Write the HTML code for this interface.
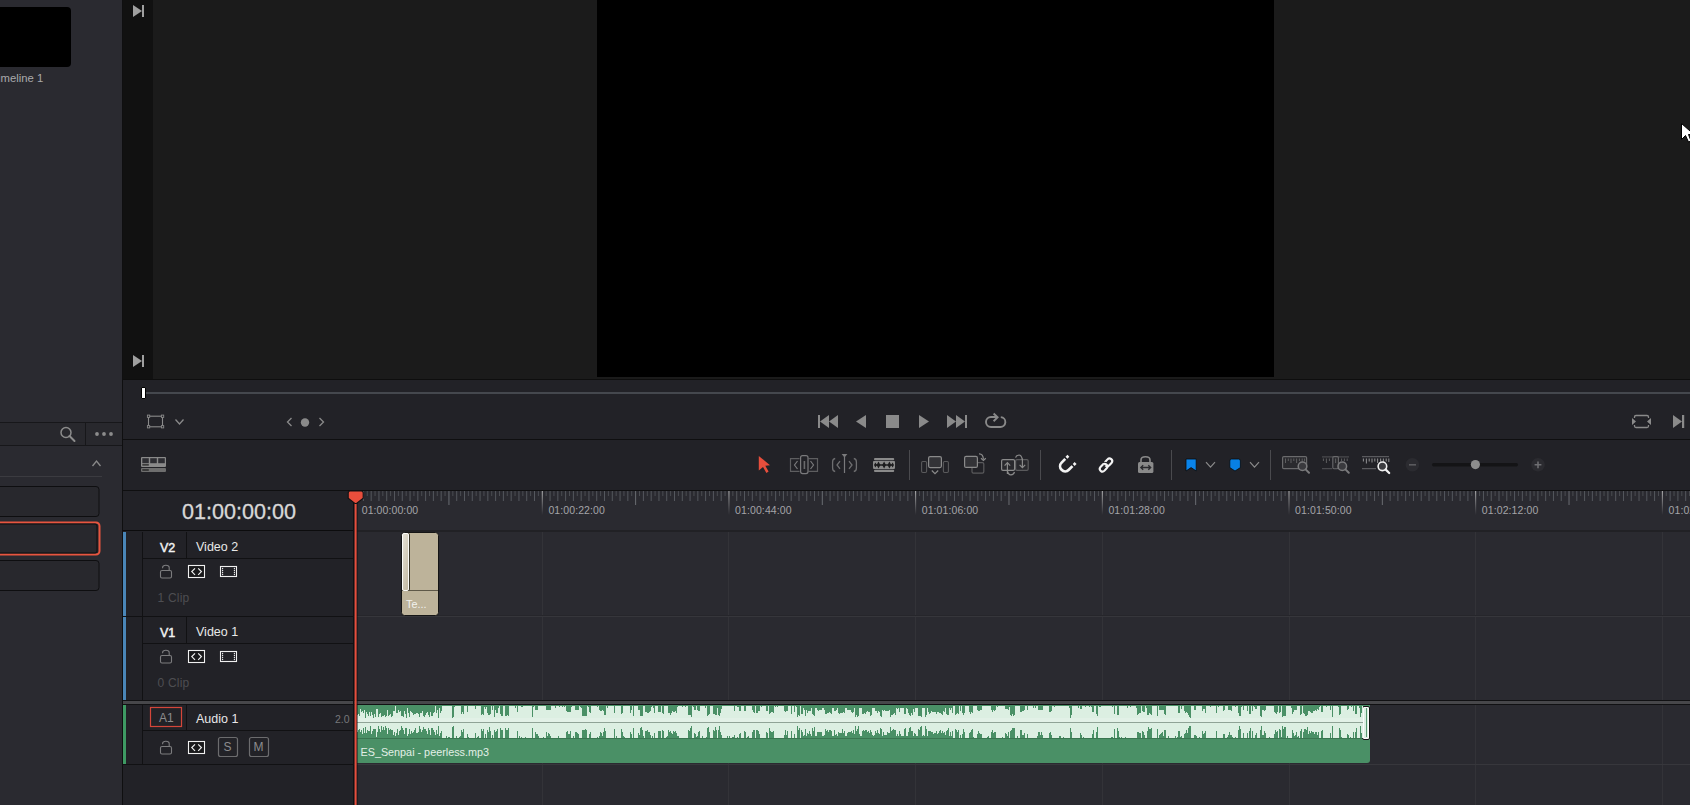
<!DOCTYPE html>
<html><head><meta charset="utf-8">
<style>
*{margin:0;padding:0;box-sizing:border-box}
html,body{width:1690px;height:805px;overflow:hidden;background:#222227;font-family:"Liberation Sans",sans-serif}
.a{position:absolute}
svg{position:absolute;overflow:visible}
.rl{top:504px;font-size:10.5px;color:#a4a4a8;white-space:nowrap;letter-spacing:0.1px}
.tn{font-size:12.5px;color:#e8e8e8;white-space:nowrap}
.tid{font-size:12.5px;color:#f2f2f2;white-space:nowrap;-webkit-text-stroke:0.45px #f2f2f2}
.cl{font-size:12px;color:#4e4e52;white-space:nowrap;letter-spacing:0.2px}
.hl{background:#111113}
</style></head><body>
<!-- LEFT PANEL -->
<div class="a" style="left:0;top:0;width:122px;height:805px;background:#2a2a30"></div>
<div class="a" style="left:122px;top:0;width:1px;height:805px;background:#0f0f10"></div>
<div class="a" style="left:-6px;top:7px;width:77px;height:60px;background:#000;border-radius:4px"></div>
<div class="a" style="left:-8.5px;top:71.5px;font-size:11.3px;color:#a9a9ab;white-space:nowrap">Timeline 1</div>
<div class="a" style="left:0;top:422px;width:122px;height:1px;background:#17171a"></div>
<div class="a" style="left:0;top:423px;width:122px;height:22px;background:#28282d"></div>
<div class="a" style="left:0;top:445px;width:122px;height:1px;background:#17171a"></div>
<div class="a" style="left:85px;top:423px;width:1px;height:22px;background:#17171a"></div>
<svg class="a" width="122" height="805" style="left:0;top:0">
 <circle cx="66" cy="432.5" r="5" fill="none" stroke="#8c8c8c" stroke-width="1.5"/>
 <path d="M69.5 436L74.5 441" stroke="#8c8c8c" stroke-width="2" stroke-linecap="round"/>
 <circle cx="97" cy="434" r="1.9" fill="#8c8c8c"/><circle cx="104" cy="434" r="1.9" fill="#8c8c8c"/><circle cx="111" cy="434" r="1.9" fill="#8c8c8c"/>
 <path d="M92.5 466L96.5 461L100.5 466" fill="none" stroke="#8a8a8a" stroke-width="1.3"/>
 <rect x="0" y="476" width="102" height="1" fill="#3b3b40"/>
 <rect x="-10" y="486.5" width="109" height="30" rx="3" fill="#28282d" stroke="#0e0e10" stroke-width="1"/>
 <rect x="-10" y="522.5" width="109.5" height="32" rx="3.5" fill="#28282d" stroke="#e8553f" stroke-width="2"/>
 <rect x="-10" y="524" width="107" height="29" rx="2" fill="none" stroke="#0e0e10" stroke-width="1"/>
 <rect x="-10" y="560.5" width="109" height="30" rx="3" fill="#28282d" stroke="#0e0e10" stroke-width="1"/>
</svg>

<!-- VIEWER -->
<div class="a" style="left:123px;top:0;width:30px;height:379px;background:#111111"></div>
<div class="a" style="left:153px;top:0;width:1537px;height:379px;background:#1b1b1b"></div>
<div class="a" style="left:597px;top:0;width:677px;height:377px;background:#000"></div>
<svg class="a" width="40" height="400" style="left:0;top:0">
 <path d="M133 5L142 11L133 17Z" fill="#a0a0a0"/><rect x="142" y="5" width="2" height="12" fill="#a0a0a0"/>
 <path d="M133 355L142 361L133 367Z" fill="#a0a0a0"/><rect x="142" y="355" width="2" height="12" fill="#a0a0a0"/>
</svg>
<!-- cursor -->
<svg class="a" width="20" height="30" style="left:0;top:0">
 <path d="M1681.5 123.5L1681.5 139.5L1685.5 135.5L1688.5 142L1691 141L1688.5 134.5L1694 134.5Z" fill="#fff" stroke="#000" stroke-width="1"/>
</svg>

<!-- SCRUBBER / TRANSPORT -->
<div class="a" style="left:123px;top:379px;width:1567px;height:1px;background:#0e0e0e"></div>
<div class="a" style="left:123px;top:380px;width:1567px;height:59px;background:#222227"></div>
<div class="a" style="left:145px;top:392px;width:1545px;height:2px;background:#45484e"></div>
<div class="a" style="left:141px;top:387px;width:5px;height:12px;background:#fff;border:1px solid #000;border-radius:1px"></div>
<svg class="a" width="1690" height="805" style="left:0;top:0">
 <rect x="148.5" y="416.2" width="14" height="10.6" fill="none" stroke="#8a8a8a" stroke-width="1.1"/>
 <g fill="#222227" stroke="#8a8a8a" stroke-width="0.9">
  <rect x="147.4" y="415.1" width="2.3" height="2.3"/><rect x="161.4" y="415.1" width="2.3" height="2.3"/>
  <rect x="147.4" y="425.6" width="2.3" height="2.3"/><rect x="161.4" y="425.6" width="2.3" height="2.3"/>
 </g>
 <path d="M175.5 419.5L179.5 424L183.5 419.5" fill="none" stroke="#8a8a8a" stroke-width="1.3"/>
 <path d="M291.5 418L287.5 422L291.5 426" fill="none" stroke="#8a8a8a" stroke-width="1.3"/>
 <circle cx="305" cy="422.5" r="4.2" fill="#8a8a8a"/>
 <path d="M319.5 418L323.5 422L319.5 426" fill="none" stroke="#8a8a8a" stroke-width="1.3"/>
 <!-- transport -->
 <g fill="#8a8a8a">
  <rect x="818" y="415" width="2" height="13"/>
  <path d="M829 415L820 421.5L829 428Z M838 415L829 421.5L838 428Z"/>
  <path d="M866 415L856 421.5L866 428Z"/>
  <rect x="886" y="415" width="13" height="13"/>
  <path d="M919 415L929 421.5L919 428Z"/>
  <path d="M947 415L956 421.5L947 428Z M956 415L965 421.5L956 428Z"/>
  <rect x="965" y="415" width="2" height="13"/>
 </g>
 <path d="M1000.8 417.1A4.95 4.95 0 0 1 1000 427H991A5 5 0 0 1 991 417H997" fill="none" stroke="#8a8a8a" stroke-width="1.9"/>
 <path d="M993.6 413.5L997.6 417.3L993.6 421.2" fill="none" stroke="#8a8a8a" stroke-width="1.9"/>
 <!-- right -->
 <rect x="1634.5" y="415.5" width="14" height="12" rx="1.5" fill="none" stroke="#8a8a8a" stroke-width="1.3"/>
 <rect x="1633" y="418" width="17" height="7" fill="#222227"/>
 <path d="M1632 418L1636 421.5L1632 425Z M1651 418L1647 421.5L1651 425Z" fill="#8a8a8a"/>
 <path d="M1673 415L1682 421.5L1673 428Z" fill="#8a8a8a"/><rect x="1682" y="415" width="2.2" height="13" fill="#8a8a8a"/>
</svg>
<div class="a" style="left:123px;top:439px;width:1567px;height:1px;background:#0f0f10"></div>

<!-- TOOLBAR -->
<div class="a" style="left:123px;top:440px;width:1567px;height:50px;background:#222227"></div>
<svg class="a" width="1690" height="805" style="left:0;top:0">
 <!-- layout icon -->
 <rect x="141" y="457" width="25" height="10" rx="1" fill="#8a8a8a"/>
 <rect x="142.3" y="458.2" width="6.5" height="5" fill="#2e2e33"/>
 <rect x="150.2" y="458.2" width="6.6" height="5" fill="#2e2e33"/>
 <rect x="158.2" y="458.2" width="6.6" height="5" fill="#2e2e33"/>
 <rect x="142.3" y="464.3" width="6.5" height="1.2" fill="#1a1a1a"/>
 <rect x="141" y="468" width="25" height="4" rx="1" fill="#6e6e6e"/>
 <rect x="142.3" y="469.4" width="6.5" height="1.2" fill="#1a1a1a"/>
 <!-- select arrow -->
 <path d="M758.8 455.9L770 465.2L765.3 465.8L768.6 471.6L766.4 472.9L763 467L758.8 470.6Z" fill="#e84e3c"/>
 <!-- trim -->
 <g fill="none" stroke="#5e5e60" stroke-width="1.2">
  <path d="M799.5 458.6H790.5V471.4H799.5M808.5 458.6H817.5V471.4H808.5"/>
 </g>
 <g fill="none" stroke="#7a7a7c" stroke-width="1.2">
  <path d="M797.5 461L794.5 465L797.5 469M810.5 461L813.5 465L810.5 469"/>
  <rect x="800.6" y="455.6" width="7.4" height="18" rx="2"/>
 </g>
 <rect x="803.6" y="461" width="1.6" height="8" fill="#6a6a6c"/>
 <!-- dynamic trim -->
 <g fill="none" stroke="#6e6e70" stroke-width="1.3">
  <path d="M835.2 458.5Q832.6 458.8 832.6 462V468Q832.6 471.2 835.2 471.5"/>
  <path d="M853.8 458.5Q856.4 458.8 856.4 462V468Q856.4 471.2 853.8 471.5"/>
  <path d="M840 461.2L837 465L840 468.8M849 461.2L852 465L849 468.8"/>
 </g>
 <rect x="843.9" y="456" width="1.2" height="17" fill="#7a7a7c"/>
 <path d="M841.6 454H847.4L844.5 457.6Z" fill="#7a7a7c"/>
 <!-- blade -->
 <g fill="#8a8a8a">
  <rect x="874" y="458" width="20.2" height="2.2" rx="1"/>
  <rect x="874" y="469.8" width="20.2" height="2.2" rx="1"/>
  <rect x="873" y="460.9" width="22" height="8" rx="0.8"/>
 </g>
 <path d="M875 465H893" stroke="#1c1c1e" stroke-width="1.5"/>
 <path d="M878.5 461.6L880.4 465L878.5 468.4L876.6 465ZM884.1 461.6L886 465L884.1 468.4L882.2 465ZM889.4 461.6L891.3 465L889.4 468.4L887.5 465ZM875.4 462.6L876.8 465L875.4 467.4L874 465ZM892.6 462.6L894 465L892.6 467.4L891.2 465Z" fill="#1c1c1e"/>
 <rect x="909" y="450" width="1" height="30" fill="#4a4a4e"/>
 <!-- insert -->
 <g fill="none" stroke="#5a5a5c" stroke-width="1.1">
  <rect x="921.6" y="461.5" width="5" height="11" rx="1.2"/>
  <rect x="943.4" y="461.5" width="5" height="11" rx="1.2"/>
 </g>
 <rect x="928.6" y="456.6" width="12.8" height="11" rx="1.5" fill="#333337" stroke="#8a8a8a" stroke-width="1.2"/>
 <path d="M931.8 470.5L935 473.6L938.2 470.5" fill="none" stroke="#8a8a8a" stroke-width="1.2"/>
 <!-- overwrite -->
 <path d="M977.5 462.6H982.4Q983.8 462.6 983.8 464V471.8Q983.8 473.2 982.4 473.2H973.4Q972 473.2 972 471.8V467.8" fill="none" stroke="#5a5a5c" stroke-width="1.2"/>
 <rect x="964.6" y="456.4" width="12.8" height="11" rx="1.5" fill="#333337" stroke="#8a8a8a" stroke-width="1.2"/>
 <path d="M979 453.8Q983.2 453.6 983.4 459.6" fill="none" stroke="#8a8a8a" stroke-width="1.2"/>
 <path d="M981 458.2L983.4 460.4L985.8 458.2" fill="none" stroke="#8a8a8a" stroke-width="1.2"/>
 <!-- replace -->
 <rect x="1015.6" y="459.6" width="12.6" height="10.8" rx="1.3" fill="#29292d" stroke="#5a5a5c" stroke-width="1.2"/>
 <rect x="1001.6" y="459.6" width="13" height="10.8" rx="1.3" fill="#29292d" stroke="#8a8a8a" stroke-width="1.2"/>
 <path d="M1007.4 474V463M1004.6 465.6L1007.4 462.6L1010.2 465.6" fill="none" stroke="#8a8a8a" stroke-width="1.2"/>
 <path d="M1007.4 471Q1008.5 475 1011 474.8Q1013.8 474.6 1014.5 472" fill="none" stroke="#8a8a8a" stroke-width="1.2"/>
 <path d="M1022.4 458.5V467.5M1019.6 464.8L1022.4 467.6L1025.2 464.8" fill="none" stroke="#8a8a8a" stroke-width="1.2"/>
 <path d="M1022.4 460Q1021.5 455 1019 455Q1016.3 455.2 1015.6 457.6" fill="none" stroke="#8a8a8a" stroke-width="1.2"/>
 <rect x="1040" y="450" width="1" height="30" fill="#4a4a4e"/>
 <!-- magnet -->
 <g transform="translate(1065.2 466.2) rotate(45)" fill="none" stroke="#f4f4f4" stroke-width="2.7">
  <path d="M-5.1 -5.2V0A5.1 5.1 0 0 0 5.1 0V-5.2"/>
 </g>
 <g transform="translate(1065.2 466.2) rotate(45)" fill="#f4f4f4">
  <rect x="-6.45" y="-9.6" width="2.7" height="2.7"/><rect x="3.75" y="-9.6" width="2.7" height="2.7"/>
 </g>
 <!-- link -->
 <g transform="translate(1106 465) rotate(-48)" fill="none" stroke-width="2.1">
  <path d="M-5.2 -2.7H-2A2.7 2.7 0 0 1 -2 2.7H-5.2A2.7 2.7 0 0 1 -5.2 -2.7Z" stroke="#f4f4f4"/>
  <path d="M2 -2.7H5.2A2.7 2.7 0 0 1 5.2 2.7H2A2.7 2.7 0 0 1 2 -2.7Z" stroke="#f4f4f4"/>
  <path d="M-1.301 -2.608A2.7 2.7 0 0 1 0.659 -0.469" stroke="#222227" stroke-width="4"/>
  <path d="M-1.5 -2.64A2.7 2.7 0 0 1 0.7 -0.3" stroke="#f4f4f4"/>
 </g>
 <!-- lock link -->
 <path d="M1141 462.5V460Q1141 456.8 1145.5 456.8Q1150 456.8 1150 460V462.5" fill="none" stroke="#8a8a8a" stroke-width="1.6"/>
 <rect x="1138" y="462" width="15.4" height="11" rx="1.5" fill="#8a8a8a"/>
 <path d="M1141 467.5H1150.5M1143.2 465.2L1140.8 467.5L1143.2 469.8M1148.3 465.2L1150.7 467.5L1148.3 469.8" fill="none" stroke="#2a2a2e" stroke-width="1.3"/>
 <rect x="1171" y="450" width="1" height="30" fill="#4a4a4e"/>
 <!-- flag -->
 <path d="M1186 459H1196.2V471L1191.1 467.6L1186 471Z" fill="#0a84ea" stroke="#0b0b0b" stroke-width="0.8"/>
 <path d="M1206 462.2L1210.5 467.2L1215 462.2" fill="none" stroke="#8a8a8a" stroke-width="1.2"/>
 <path d="M1231.5 459H1238.5Q1240.4 459 1240.4 461V467.6L1235 471L1229.8 467.6V461Q1229.8 459 1231.5 459Z" fill="#0880e4" stroke="#0b0b0b" stroke-width="0.8"/>
 <path d="M1250 462.2L1254.5 467.2L1259 462.2" fill="none" stroke="#8a8a8a" stroke-width="1.2"/>
 <rect x="1270" y="450" width="1" height="30" fill="#4a4a4e"/>
 <!-- zoom icons -->
 <rect x="1282.6" y="456.6" width="24" height="12" rx="1.2" fill="#2a2a2e" stroke="#6a6a6c" stroke-width="1.2"/>
 <path d="M1285.5 458.5V463M1288.3 458.5V461M1291 458.5V463M1293.8 458.5V461M1296.6 458.5V463M1299.4 458.5V461M1302.2 458.5V462M1304.6 458.5V461" stroke="#5e5e60" stroke-width="1"/>
 <circle cx="1302.5" cy="466.3" r="4.3" fill="#3a3a3e" stroke="#7a7a7c" stroke-width="1.5"/>
 <path d="M1305.6 469.4L1309 472.8" stroke="#7a7a7c" stroke-width="2" stroke-linecap="round"/>
 <!-- icon 2 -->
 <path d="M1322 456.8H1349M1322 468.6H1332" stroke="#4a4a4e" stroke-width="1.2"/>
 <path d="M1323.4 458.5V461M1326.4 458.5V463M1329.4 458.5V461M1341.6 458.5V461M1344.4 458.5V461M1347.2 458.5V461" stroke="#5e5e60" stroke-width="1"/>
 <rect x="1332.8" y="456.6" width="5.6" height="12.2" rx="1.2" fill="#2a2a2e" stroke="#6a6a6c" stroke-width="1.1"/>
 <path d="M1335.6 458.5V463" stroke="#5e5e60" stroke-width="1"/>
 <circle cx="1342.3" cy="466.3" r="4.3" fill="#3a3a3e" stroke="#7a7a7c" stroke-width="1.5"/>
 <path d="M1345.4 469.4L1348.8 472.8" stroke="#7a7a7c" stroke-width="2" stroke-linecap="round"/>
 <!-- icon 3 -->
 <path d="M1362 456.6H1389M1362 468.6H1376" stroke="#5a5a5e" stroke-width="1.3"/>
 <path d="M1363.4 458.5V461.5M1366.4 458.5V463.5M1369.2 458.5V461.5M1372 458.5V462.5M1374.8 458.5V461.5M1377.6 458.5V463M1380.6 458.5V461.5M1383.4 458.5V462M1386.2 458.5V461.5M1388.8 458.5V462" stroke="#8a8a8c" stroke-width="1.1"/>
 <circle cx="1382.4" cy="466.3" r="4.3" fill="#3e3e42" stroke="#f2f2f2" stroke-width="1.6"/>
 <path d="M1385.5 469.4L1389.2 473" stroke="#f2f2f2" stroke-width="2.2" stroke-linecap="round"/>
 <!-- slider -->
 <circle cx="1412.4" cy="464.7" r="6.8" fill="#2b2b30"/>
 <rect x="1409" y="464" width="7" height="1.6" fill="#5a5a5e"/>
 <rect x="1432" y="463" width="86" height="3.4" rx="1.7" fill="#141416"/>
 <circle cx="1475.4" cy="464.6" r="4.6" fill="#8c8c8c"/>
 <circle cx="1538" cy="464.7" r="6.8" fill="#2b2b30"/>
 <path d="M1534.6 464.8H1541.4M1538 461.4V468.2" stroke="#6e6e72" stroke-width="1.6"/>
</svg>

<div class="a" style="left:123px;top:490px;width:1567px;height:1px;background:#0f0f10"></div>

<!-- TIMELINE -->
<div class="a" style="left:123px;top:491px;width:231px;height:314px;background:#222227"></div>
<div class="a" style="left:354px;top:491px;width:1336px;height:314px;background:#2a2a30"></div>
<div class="a" style="left:542px;top:531px;width:1px;height:274px;background:#333338"></div><div class="a" style="left:728px;top:531px;width:1px;height:274px;background:#333338"></div><div class="a" style="left:915px;top:531px;width:1px;height:274px;background:#333338"></div><div class="a" style="left:1102px;top:531px;width:1px;height:274px;background:#333338"></div><div class="a" style="left:1289px;top:531px;width:1px;height:274px;background:#333338"></div><div class="a" style="left:1475px;top:531px;width:1px;height:274px;background:#333338"></div><div class="a" style="left:1662px;top:531px;width:1px;height:274px;background:#333338"></div><svg class="a" width="1690" height="805" style="left:0;top:0">
<path d="M359.49 491V496M367.27 491V496M375.05 491V496M382.82 491V496M390.60 491V496M398.38 491V496M406.16 491V496M413.94 491V496M421.72 491V496M429.49 491V496M437.27 491V496M445.05 491V496M452.83 491V496M460.61 491V496M468.39 491V496M476.16 491V496M483.94 491V496M491.72 491V496M499.50 491V496M507.28 491V496M515.06 491V496M522.83 491V496M530.61 491V496M538.39 491V496M546.17 491V496M553.95 491V496M561.73 491V496M569.50 491V496M577.28 491V496M585.06 491V496M592.84 491V496M600.62 491V496M608.40 491V496M616.17 491V496M623.95 491V496M631.73 491V496M639.51 491V496M647.29 491V496M655.07 491V496M662.84 491V496M670.62 491V496M678.40 491V496M686.18 491V496M693.96 491V496M701.74 491V496M709.51 491V496M717.29 491V496M725.07 491V496M732.85 491V496M740.63 491V496M748.41 491V496M756.18 491V496M763.96 491V496M771.74 491V496M779.52 491V496M787.30 491V496M795.08 491V496M802.85 491V496M810.63 491V496M818.41 491V496M826.19 491V496M833.97 491V496M841.75 491V496M849.52 491V496M857.30 491V496M865.08 491V496M872.86 491V496M880.64 491V496M888.42 491V496M896.19 491V496M903.97 491V496M911.75 491V496M919.53 491V496M927.31 491V496M935.09 491V496M942.86 491V496M950.64 491V496M958.42 491V496M966.20 491V496M973.98 491V496M981.76 491V496M989.53 491V496M997.31 491V496M1005.09 491V496M1012.87 491V496M1020.65 491V496M1028.43 491V496M1036.20 491V496M1043.98 491V496M1051.76 491V496M1059.54 491V496M1067.32 491V496M1075.10 491V496M1082.87 491V496M1090.65 491V496M1098.43 491V496M1106.21 491V496M1113.99 491V496M1121.77 491V496M1129.54 491V496M1137.32 491V496M1145.10 491V496M1152.88 491V496M1160.66 491V496M1168.44 491V496M1176.21 491V496M1183.99 491V496M1191.77 491V496M1199.55 491V496M1207.33 491V496M1215.11 491V496M1222.88 491V496M1230.66 491V496M1238.44 491V496M1246.22 491V496M1254.00 491V496M1261.78 491V496M1269.55 491V496M1277.33 491V496M1285.11 491V496M1292.89 491V496M1300.67 491V496M1308.45 491V496M1316.22 491V496M1324.00 491V496M1331.78 491V496M1339.56 491V496M1347.34 491V496M1355.12 491V496M1362.89 491V496M1370.67 491V496M1378.45 491V496M1386.23 491V496M1394.01 491V496M1401.79 491V496M1409.56 491V496M1417.34 491V496M1425.12 491V496M1432.90 491V496M1440.68 491V496M1448.46 491V496M1456.23 491V496M1464.01 491V496M1471.79 491V496M1479.57 491V496M1487.35 491V496M1495.13 491V496M1502.90 491V496M1510.68 491V496M1518.46 491V496M1526.24 491V496M1534.02 491V496M1541.80 491V496M1549.57 491V496M1557.35 491V496M1565.13 491V496M1572.91 491V496M1580.69 491V496M1588.47 491V496M1596.24 491V496M1604.02 491V496M1611.80 491V496M1619.58 491V496M1627.36 491V496M1635.14 491V496M1642.91 491V496M1650.69 491V496M1658.47 491V496M1666.25 491V496M1674.03 491V496M1681.81 491V496M1689.58 491V496" stroke="#4b4d52" stroke-width="1"/>
<path d="M363.38 491V501M371.16 491V501M378.94 491V501M386.71 491V501M394.49 491V501M402.27 491V501M410.05 491V501M417.83 491V501M425.61 491V501M433.38 491V501M441.16 491V501M456.72 491V501M464.50 491V501M472.28 491V501M480.05 491V501M487.83 491V501M495.61 491V501M503.39 491V501M511.17 491V501M518.95 491V501M526.72 491V501M534.50 491V501M550.06 491V501M557.84 491V501M565.62 491V501M573.39 491V501M581.17 491V501M588.95 491V501M596.73 491V501M604.51 491V501M612.29 491V501M620.06 491V501M627.84 491V501M643.40 491V501M651.18 491V501M658.96 491V501M666.73 491V501M674.51 491V501M682.29 491V501M690.07 491V501M697.85 491V501M705.62 491V501M713.40 491V501M721.18 491V501M736.74 491V501M744.52 491V501M752.30 491V501M760.07 491V501M767.85 491V501M775.63 491V501M783.41 491V501M791.19 491V501M798.97 491V501M806.74 491V501M814.52 491V501M830.08 491V501M837.86 491V501M845.63 491V501M853.41 491V501M861.19 491V501M868.97 491V501M876.75 491V501M884.53 491V501M892.31 491V501M900.08 491V501M907.86 491V501M923.42 491V501M931.20 491V501M938.98 491V501M946.75 491V501M954.53 491V501M962.31 491V501M970.09 491V501M977.87 491V501M985.64 491V501M993.42 491V501M1001.20 491V501M1016.76 491V501M1024.54 491V501M1032.32 491V501M1040.09 491V501M1047.87 491V501M1055.65 491V501M1063.43 491V501M1071.21 491V501M1078.99 491V501M1086.76 491V501M1094.54 491V501M1110.10 491V501M1117.88 491V501M1125.65 491V501M1133.43 491V501M1141.21 491V501M1148.99 491V501M1156.77 491V501M1164.55 491V501M1172.33 491V501M1180.10 491V501M1187.88 491V501M1203.44 491V501M1211.22 491V501M1218.99 491V501M1226.77 491V501M1234.55 491V501M1242.33 491V501M1250.11 491V501M1257.89 491V501M1265.66 491V501M1273.44 491V501M1281.22 491V501M1296.78 491V501M1304.56 491V501M1312.34 491V501M1320.11 491V501M1327.89 491V501M1335.67 491V501M1343.45 491V501M1351.23 491V501M1359.01 491V501M1366.78 491V501M1374.56 491V501M1390.12 491V501M1397.90 491V501M1405.68 491V501M1413.45 491V501M1421.23 491V501M1429.01 491V501M1436.79 491V501M1444.57 491V501M1452.34 491V501M1460.12 491V501M1467.90 491V501M1483.46 491V501M1491.24 491V501M1499.01 491V501M1506.79 491V501M1514.57 491V501M1522.35 491V501M1530.13 491V501M1537.91 491V501M1545.68 491V501M1553.46 491V501M1561.24 491V501M1576.80 491V501M1584.58 491V501M1592.36 491V501M1600.13 491V501M1607.91 491V501M1615.69 491V501M1623.47 491V501M1631.25 491V501M1639.03 491V501M1646.80 491V501M1654.58 491V501M1670.14 491V501M1677.92 491V501M1685.70 491V501" stroke="#55585e" stroke-width="1"/>
<path d="M448.94 491V505M635.62 491V505M822.30 491V505M1008.98 491V505M1195.66 491V505M1382.34 491V505M1569.02 491V505" stroke="#6a6d72" stroke-width="1"/>
</svg><svg class="a" width="1690" height="805" style="left:0;top:0"><defs><linearGradient id="mt" x1="0" y1="0" x2="0" y2="1"><stop offset="0" stop-color="#b8b8b8"/><stop offset="1" stop-color="#2a2a30"/></linearGradient></defs><rect x="541.78" y="491" width="1" height="24" fill="url(#mt)"/><rect x="728.46" y="491" width="1" height="24" fill="url(#mt)"/><rect x="915.14" y="491" width="1" height="24" fill="url(#mt)"/><rect x="1101.82" y="491" width="1" height="24" fill="url(#mt)"/><rect x="1288.50" y="491" width="1" height="24" fill="url(#mt)"/><rect x="1475.18" y="491" width="1" height="24" fill="url(#mt)"/><rect x="1661.86" y="491" width="1" height="24" fill="url(#mt)"/></svg><div class="a rl" style="left:361.7px">01:00:00:00</div><div class="a rl" style="left:548.4px">01:00:22:00</div><div class="a rl" style="left:735.1px">01:00:44:00</div><div class="a rl" style="left:921.7px">01:01:06:00</div><div class="a rl" style="left:1108.4px">01:01:28:00</div><div class="a rl" style="left:1295.1px">01:01:50:00</div><div class="a rl" style="left:1481.8px">01:02:12:00</div><div class="a rl" style="left:1668.5px">01:02:34:00</div>
<div class="a" style="left:123px;top:530px;width:231px;height:1px;background:#0c0c0d"></div>
<div class="a" style="left:354px;top:530px;width:1336px;height:2px;background:#212125"></div>
<div class="a" style="left:182px;top:498.5px;font-size:21.6px;color:#d8d8d8;white-space:nowrap;-webkit-text-stroke:0.3px #d8d8d8">01:00:00:00</div>
<!-- track headers lines -->
<div class="a" style="left:123px;top:532px;width:3px;height:84px;background:#4a86b8"></div>
<div class="a" style="left:123px;top:617px;width:3px;height:83px;background:#4a86b8"></div>
<div class="a" style="left:123px;top:705px;width:3px;height:59px;background:#3e9a63"></div>
<div class="a hl" style="left:142px;top:532px;width:1px;height:84px"></div>
<div class="a hl" style="left:142px;top:617px;width:1px;height:83px"></div>
<div class="a hl" style="left:142px;top:705px;width:1px;height:59px"></div>
<div class="a hl" style="left:186px;top:532px;width:1px;height:26px"></div>
<div class="a hl" style="left:186px;top:617px;width:1px;height:26px"></div>
<div class="a hl" style="left:186px;top:705px;width:1px;height:25px"></div>
<div class="a hl" style="left:142px;top:558px;width:212px;height:1px"></div>
<div class="a hl" style="left:142px;top:643px;width:212px;height:1px"></div>
<div class="a hl" style="left:142px;top:730px;width:212px;height:1px"></div>
<div class="a hl" style="left:123px;top:616px;width:231px;height:1px"></div>
<div class="a" style="left:354px;top:615px;width:1336px;height:1px;background:#26262b"></div>
<div class="a" style="left:354px;top:616px;width:1336px;height:1px;background:#36363b"></div>
<div class="a hl" style="left:123px;top:700px;width:1567px;height:1px"></div>
<div class="a" style="left:123px;top:701px;width:1567px;height:3px;background:#47474a"></div>
<div class="a hl" style="left:123px;top:704px;width:1567px;height:1px"></div>
<div class="a hl" style="left:123px;top:764px;width:231px;height:1px"></div>
<div class="a" style="left:354px;top:764px;width:1336px;height:1px;background:#37373c"></div>
<div class="a hl" style="left:353px;top:491px;width:1px;height:314px"></div>
<!-- names -->
<div class="a tid" style="left:160px;top:540.5px">V2</div>
<div class="a tn" style="left:196px;top:540px">Video 2</div>
<div class="a cl" style="left:157.5px;top:590.5px">1 Clip</div>
<div class="a tid" style="left:160px;top:625.5px">V1</div>
<div class="a tn" style="left:196px;top:625px">Video 1</div>
<div class="a cl" style="left:157.5px;top:675.5px">0 Clip</div>
<div class="a tn" style="left:196px;top:712px">Audio 1</div>
<div class="a" style="left:335px;top:713px;font-size:10.5px;color:#77777a">2.0</div>
<svg class="a" width="1690" height="805" style="left:0;top:0">
 <g transform="translate(0 0)"><rect x="160.5" y="570.5" width="11" height="7.5" rx="1.5" fill="none" stroke="#7c7c7e" stroke-width="1.1"/>
   <path d="M162.6 568.2V567.6A3.3 2.3 0 0 1 169.2 567.6V570.5" fill="none" stroke="#7c7c7e" stroke-width="1.1"/></g><g transform="translate(0 0)"><rect x="188.5" y="565.5" width="16" height="12" fill="#19191b" stroke="#f0f0f0" stroke-width="1.1"/>
   <path d="M195 568.3L191.8 571.6L195 574.9M198.2 568.3L201.4 571.6L198.2 574.9" fill="none" stroke="#f0f0f0" stroke-width="1.2"/></g>
 <g transform="translate(0 85)"><rect x="160.5" y="570.5" width="11" height="7.5" rx="1.5" fill="none" stroke="#7c7c7e" stroke-width="1.1"/>
   <path d="M162.6 568.2V567.6A3.3 2.3 0 0 1 169.2 567.6V570.5" fill="none" stroke="#7c7c7e" stroke-width="1.1"/></g><g transform="translate(0 85)"><rect x="188.5" y="565.5" width="16" height="12" fill="#19191b" stroke="#f0f0f0" stroke-width="1.1"/>
   <path d="M195 568.3L191.8 571.6L195 574.9M198.2 568.3L201.4 571.6L198.2 574.9" fill="none" stroke="#f0f0f0" stroke-width="1.2"/></g>
 <g transform="translate(0 176)"><rect x="160.5" y="570.5" width="11" height="7.5" rx="1.5" fill="none" stroke="#7c7c7e" stroke-width="1.1"/>
   <path d="M162.6 568.2V567.6A3.3 2.3 0 0 1 169.2 567.6V570.5" fill="none" stroke="#7c7c7e" stroke-width="1.1"/></g><g transform="translate(0 176)"><rect x="188.5" y="565.5" width="16" height="12" fill="#19191b" stroke="#f0f0f0" stroke-width="1.1"/>
   <path d="M195 568.3L191.8 571.6L195 574.9M198.2 568.3L201.4 571.6L198.2 574.9" fill="none" stroke="#f0f0f0" stroke-width="1.2"/></g>
 <g><rect x="220.5" y="566.5" width="16" height="10" fill="none" stroke="#f0f0f0" stroke-width="1.1"/>
  <g fill="#f0f0f0"><circle cx="222.6" cy="568.5" r=".65"/><circle cx="222.6" cy="570.5" r=".65"/><circle cx="222.6" cy="572.5" r=".65"/><circle cx="222.6" cy="574.5" r=".65"/>
  <circle cx="234.4" cy="568.5" r=".65"/><circle cx="234.4" cy="570.5" r=".65"/><circle cx="234.4" cy="572.5" r=".65"/><circle cx="234.4" cy="574.5" r=".65"/></g></g>
 <g transform="translate(0 85)"><rect x="220.5" y="566.5" width="16" height="10" fill="none" stroke="#f0f0f0" stroke-width="1.1"/>
  <g fill="#f0f0f0"><circle cx="222.6" cy="568.5" r=".65"/><circle cx="222.6" cy="570.5" r=".65"/><circle cx="222.6" cy="572.5" r=".65"/><circle cx="222.6" cy="574.5" r=".65"/>
  <circle cx="234.4" cy="568.5" r=".65"/><circle cx="234.4" cy="570.5" r=".65"/><circle cx="234.4" cy="572.5" r=".65"/><circle cx="234.4" cy="574.5" r=".65"/></g></g>
 <rect x="150.5" y="707.5" width="31" height="19" fill="none" stroke="#d4463a" stroke-width="1.2"/>
 <rect x="218.5" y="737.5" width="19" height="19" rx="2" fill="none" stroke="#6c6c6e" stroke-width="1.2"/>
 <rect x="249.5" y="737.5" width="19" height="19" rx="2" fill="none" stroke="#6c6c6e" stroke-width="1.2"/>
</svg>
<div class="a" style="left:159px;top:711px;font-size:12px;color:#8c8c8e">A1</div>
<div class="a" style="left:223.5px;top:740px;font-size:12px;color:#8c8c8e">S</div>
<div class="a" style="left:253.5px;top:740px;font-size:12px;color:#8c8c8e">M</div>
<!-- V2 clip -->
<div class="a" style="left:401px;top:532px;width:38px;height:84px;background:#bdb39a;border-radius:3.5px;border:1px solid #151515"></div>
<div class="a" style="left:402px;top:590px;width:36px;height:1px;background:#5e5848"></div>
<div class="a" style="left:402px;top:533px;width:6.5px;height:57.5px;border:1px solid #fbfbf8;border-radius:2px;background:linear-gradient(100deg,#e4e0d4,#c2b9a2);box-shadow:1px 0 0 #3a3628"></div>
<div class="a" style="left:406px;top:598px;font-size:10.8px;color:#f2f2ee">Te...</div>
<!-- audio clip -->
<div class="a" style="left:357px;top:705px;width:1013px;height:58px;background:#4a9066;border-radius:0 0 3px 0"></div>
<div class="a" style="left:357px;top:738px;width:1006px;height:1px;background:#3a7550"></div>
<div class="a" style="left:360.5px;top:746px;font-size:10.8px;color:#e3efe6;white-space:nowrap">ES_Senpai - peerless.mp3</div>
<div class="a" style="left:1362px;top:705.5px;width:7.5px;height:34px;border:1px solid #141414;border-radius:2px;box-shadow:inset 0 0 0 1px #fafafa;background:#dcefe2"></div>
<div class="a" style="left:1365.5px;top:708px;width:1px;height:29px;background:#5a9a72"></div>

<svg class="a" width="1690" height="805" style="left:0;top:0" shape-rendering="crispEdges">
<path d="M357 722.5H357V715H358V714H359V716H360V709H361V712H362V711H363V713H364V710H365V718H366V712H367V714H368V716H369V712H370V716H371V712H372V715H373V718H374V714H375V717H376V709H377V709H378V717H379V714H380V713H381V717H382V716H383V716H384V715H385V717H386V716H387V710H388V716H389V715H390V714H391V717H392V716H393V711H394V711H395V706H396V713H397V713H398V710H399V712H400V711H401V716H402V716H403V717H404V711H405V714H406V718H407V708H408V713H409V717H410V711H411V712H412V713H413V715H414V714H415V714H416V713H417V713H418V714H419V717H420V713H421V713H422V711H423V716H424V717H425V715H426V713H427V712H428V715H429V717H430V712H431V716H432V716H433V713H434V712H435V706H436V713H437V710H438V718H439V708H440V713H441V711H442V706H443V706H444V706H445V706H446V706H447V706H448V706H449V706H450V706H451V706H452V718H453V717H454V707H455V706H456V706H457V706H458V706H459V706H460V706H461V714H462V712H463V714H464V706H465V706H466V706H467V712H468V706H469V706H470V706H471V706H472V706H473V706H474V706H475V709H476V706H477V706H478V706H479V706H480V706H481V715H482V714H483V715H484V707H485V709H486V707H487V713H488V715H489V715H490V714H491V706H492V710H493V706H494V717H495V710H496V713H497V713H498V708H499V706H500V714H501V716H502V716H503V706H504V706H505V716H506V716H507V715H508V716H509V706H510V706H511V706H512V706H513V706H514V706H515V708H516V706H517V712H518V706H519V706H520V706H521V707H522V707H523V706H524V706H525V706H526V706H527V706H528V706H529V706H530V706H531V706H532V717H533V707H534V706H535V710H536V710H537V710H538V706H539V706H540V706H541V706H542V706H543V706H544V706H545V706H546V710H547V710H548V710H549V710H550V710H551V706H552V706H553V706H554V706H555V708H556V706H557V706H558V706H559V707H560V706H561V706H562V707H563V706H564V707H565V706H566V711H567V712H568V712H569V712H570V712H571V707H572V706H573V706H574V706H575V710H576V710H577V710H578V710H579V706H580V707H581V708H582V716H583V716H584V716H585V716H586V716H587V706H588V707H589V712H590V713H591V706H592V706H593V706H594V706H595V706H596V706H597V707H598V706H599V710H600V711H601V711H602V710H603V711H604V715H605V715H606V706H607V708H608V706H609V706H610V706H611V706H612V706H613V706H614V713H615V706H616V706H617V706H618V706H619V706H620V706H621V714H622V713H623V706H624V706H625V706H626V706H627V706H628V706H629V706H630V713H631V710H632V706H633V716H634V706H635V706H636V706H637V706H638V710H639V710H640V716H641V716H642V716H643V706H644V706H645V712H646V712H647V713H648V713H649V712H650V711H651V707H652V706H653V708H654V713H655V706H656V706H657V706H658V712H659V712H660V712H661V706H662V713H663V714H664V706H665V706H666V706H667V706H668V713H669V713H670V715H671V713H672V711H673V712H674V712H675V711H676V713H677V707H678V706H679V706H680V706H681V706H682V707H683V706H684V706H685V707H686V706H687V706H688V715H689V715H690V715H691V717H692V706H693V707H694V710H695V710H696V706H697V710H698V711H699V711H700V706H701V706H702V706H703V706H704V706H705V708H706V706H707V716H708V715H709V714H710V706H711V706H712V706H713V714H714V714H715V715H716V715H717V708H718V715H719V716H720V713H721V709H722V706H723V706H724V706H725V706H726V706H727V706H728V706H729V706H730V706H731V706H732V706H733V706H734V711H735V706H736V706H737V707H738V707H739V711H740V711H741V706H742V706H743V706H744V711H745V711H746V706H747V706H748V706H749V706H750V706H751V706H752V710H753V712H754V713H755V706H756V713H757V713H758V711H759V711H760V706H761V707H762V706H763V706H764V706H765V706H766V711H767V711H768V706H769V714H770V713H771V712H772V712H773V713H774V706H775V707H776V706H777V707H778V706H779V706H780V706H781V706H782V706H783V706H784V711H785V712H786V711H787V711H788V706H789V706H790V706H791V714H792V706H793V706H794V712H795V706H796V707H797V717H798V715H799V716H800V706H801V714H802V714H803V708H804V710H805V716H806V710H807V713H808V711H809V711H810V711H811V708H812V714H813V715H814V716H815V708H816V708H817V710H818V711H819V710H820V710H821V710H822V708H823V708H824V710H825V714H826V714H827V713H828V713H829V712H830V713H831V714H832V708H833V708H834V711H835V711H836V710H837V708H838V713H839V714H840V713H841V713H842V713H843V712H844V713H845V708H846V708H847V710H848V710H849V710H850V710H851V712H852V713H853V712H854V708H855V717H856V715H857V717H858V716H859V708H860V708H861V708H862V714H863V714H864V713H865V714H866V712H867V711H868V712H869V712H870V716H871V715H872V708H873V708H874V708H875V711H876V711H877V713H878V711H879V712H880V716H881V717H882V710H883V711H884V710H885V711H886V711H887V711H888V711H889V710H890V717H891V715H892V715H893V714H894V713H895V715H896V708H897V709H898V708H899V712H900V708H901V708H902V708H903V708H904V714H905V714H906V708H907V709H908V713H909V715H910V716H911V713H912V715H913V709H914V712H915V708H916V708H917V708H918V716H919V716H920V716H921V717H922V708H923V708H924V708H925V717H926V715H927V708H928V712H929V714H930V713H931V711H932V712H933V712H934V712H935V712H936V714H937V712H938V712H939V713H940V713H941V714H942V715H943V711H944V712H945V708H946V714H947V715H948V715H949V708H950V710H951V708H952V713H953V706H954V706H955V715H956V714H957V713H958V714H959V706H960V711H961V706H962V713H963V715H964V713H965V706H966V706H967V706H968V706H969V712H970V714H971V712H972V713H973V706H974V706H975V706H976V706H977V710H978V711H979V711H980V710H981V710H982V706H983V706H984V706H985V706H986V706H987V706H988V706H989V706H990V706H991V710H992V712H993V710H994V711H995V710H996V706H997V707H998V706H999V706H1000V706H1001V706H1002V706H1003V706H1004V706H1005V709H1006V709H1007V709H1008V710H1009V707H1010V715H1011V716H1012V714H1013V716H1014V715H1015V706H1016V706H1017V706H1018V706H1019V706H1020V712H1021V712H1022V711H1023V711H1024V710H1025V706H1026V706H1027V710H1028V706H1029V706H1030V706H1031V706H1032V706H1033V708H1034V706H1035V708H1036V706H1037V706H1038V710H1039V710H1040V710H1041V710H1042V710H1043V706H1044V706H1045V706H1046V706H1047V706H1048V706H1049V712H1050V712H1051V711H1052V706H1053V706H1054V707H1055V706H1056V706H1057V706H1058V706H1059V706H1060V706H1061V706H1062V706H1063V706H1064V706H1065V706H1066V706H1067V706H1068V706H1069V708H1070V718H1071V715H1072V706H1073V706H1074V706H1075V706H1076V706H1077V706H1078V708H1079V706H1080V709H1081V709H1082V706H1083V706H1084V706H1085V707H1086V706H1087V706H1088V706H1089V707H1090V706H1091V707H1092V712H1093V712H1094V706H1095V706H1096V714H1097V716H1098V706H1099V707H1100V707H1101V706H1102V706H1103V706H1104V706H1105V706H1106V706H1107V706H1108V706H1109V706H1110V706H1111V706H1112V707H1113V706H1114V714H1115V706H1116V706H1117V715H1118V715H1119V706H1120V706H1121V706H1122V706H1123V706H1124V706H1125V706H1126V706H1127V708H1128V706H1129V706H1130V707H1131V706H1132V706H1133V706H1134V706H1135V706H1136V708H1137V715H1138V714H1139V713H1140V713H1141V706H1142V711H1143V712H1144V712H1145V706H1146V708H1147V715H1148V715H1149V713H1150V714H1151V715H1152V706H1153V706H1154V706H1155V706H1156V706H1157V716H1158V706H1159V710H1160V710H1161V710H1162V710H1163V710H1164V714H1165V715H1166V706H1167V706H1168V706H1169V706H1170V706H1171V706H1172V706H1173V706H1174V706H1175V706H1176V706H1177V706H1178V713H1179V713H1180V706H1181V709H1182V706H1183V706H1184V711H1185V713H1186V712H1187V713H1188V715H1189V717H1190V718H1191V706H1192V706H1193V706H1194V710H1195V710H1196V706H1197V706H1198V706H1199V706H1200V706H1201V706H1202V711H1203V709H1204V709H1205V713H1206V706H1207V706H1208V706H1209V706H1210V707H1211V706H1212V706H1213V706H1214V706H1215V706H1216V713H1217V706H1218V707H1219V706H1220V706H1221V706H1222V706H1223V711H1224V710H1225V706H1226V706H1227V706H1228V710H1229V710H1230V710H1231V711H1232V706H1233V706H1234V706H1235V707H1236V706H1237V706H1238V713H1239V716H1240V716H1241V707H1242V706H1243V710H1244V706H1245V706H1246V706H1247V711H1248V706H1249V714H1250V714H1251V706H1252V711H1253V706H1254V707H1255V709H1256V709H1257V706H1258V706H1259V706H1260V716H1261V717H1262V710H1263V710H1264V711H1265V710H1266V706H1267V706H1268V706H1269V706H1270V706H1271V706H1272V706H1273V706H1274V712H1275V713H1276V714H1277V712H1278V706H1279V713H1280V712H1281V706H1282V717H1283V716H1284V716H1285V716H1286V706H1287V706H1288V706H1289V706H1290V706H1291V708H1292V714H1293V712H1294V710H1295V710H1296V710H1297V706H1298V706H1299V706H1300V715H1301V714H1302V706H1303V713H1304V714H1305V716H1306V716H1307V715H1308V711H1309V711H1310V712H1311V713H1312V713H1313V711H1314V711H1315V710H1316V711H1317V709H1318V710H1319V707H1320V706H1321V712H1322V712H1323V706H1324V706H1325V706H1326V707H1327V706H1328V706H1329V706H1330V710H1331V706H1332V717H1333V706H1334V706H1335V706H1336V706H1337V706H1338V707H1339V715H1340V714H1341V706H1342V706H1343V706H1344V706H1345V706H1346V706H1347V710H1348V709H1349V706H1350V706H1351V707H1352V706H1353V711H1354V706H1355V714H1356V714H1357V706H1358V706H1359V708H1360V717H1361V713H1362V706H1363V722.5Z" fill="#dcefe2"/>
<path d="M357 722.5H357V732H358V730H359V729H360V732H361V730H362V734H363V728H364V733H365V727H366V733H367V730H368V731H369V731H370V726H371V734H372V731H373V729H374V729H375V729H376V737H377V732H378V726H379V729H380V732H381V726H382V730H383V727H384V730H385V726H386V728H387V734H388V728H389V730H390V729H391V730H392V730H393V735H394V732H395V736H396V733H397V729H398V735H399V731H400V730H401V726H402V728H403V730H404V734H405V728H406V728H407V736H408V734H409V729H410V734H411V731H412V733H413V732H414V730H415V728H416V733H417V733H418V732H419V726H420V729H421V732H422V730H423V727H424V729H425V729H426V731H427V734H428V728H429V730H430V735H431V728H432V728H433V730H434V732H435V735H436V730H437V734H438V726H439V736H440V733H441V731H442V738H443V738H444V738H445V738H446V736H447V738H448V737H449V737H450V738H451V738H452V727H453V726H454V738H455V738H456V736H457V738H458V738H459V737H460V736H461V730H462V732H463V729H464V738H465V738H466V738H467V734H468V737H469V738H470V738H471V738H472V738H473V738H474V738H475V733H476V738H477V737H478V736H479V738H480V738H481V729H482V731H483V729H484V738H485V734H486V738H487V730H488V732H489V727H490V731H491V738H492V735H493V738H494V730H495V732H496V731H497V729H498V738H499V738H500V728H501V730H502V730H503V738H504V738H505V728H506V730H507V730H508V728H509V738H510V738H511V738H512V738H513V738H514V738H515V738H516V738H517V731H518V738H519V736H520V738H521V737H522V738H523V738H524V738H525V737H526V738H527V738H528V738H529V738H530V738H531V738H532V728H533V738H534V738H535V732H536V734H537V734H538V736H539V738H540V738H541V738H542V738H543V737H544V738H545V738H546V732H547V736H548V733H549V734H550V736H551V738H552V738H553V738H554V738H555V738H556V738H557V738H558V736H559V738H560V738H561V738H562V738H563V738H564V738H565V738H566V732H567V731H568V734H569V734H570V731H571V738H572V738H573V736H574V738H575V732H576V732H577V733H578V734H579V738H580V738H581V738H582V730H583V730H584V730H585V729H586V730H587V738H588V738H589V734H590V732H591V738H592V738H593V738H594V738H595V738H596V738H597V737H598V738H599V736H600V732H601V733H602V736H603V732H604V728H605V731H606V738H607V738H608V738H609V738H610V738H611V738H612V738H613V738H614V729H615V738H616V736H617V738H618V738H619V738H620V738H621V729H622V732H623V736H624V737H625V738H626V738H627V738H628V738H629V738H630V732H631V734H632V738H633V728H634V738H635V738H636V738H637V738H638V733H639V735H640V728H641V727H642V730H643V736H644V738H645V731H646V731H647V730H648V732H649V732H650V735H651V738H652V736H653V738H654V733H655V738H656V738H657V738H658V731H659V731H660V731H661V738H662V730H663V731H664V738H665V738H666V737H667V736H668V730H669V732H670V731H671V733H672V734H673V731H674V732H675V731H676V733H677V736H678V736H679V738H680V738H681V738H682V738H683V738H684V738H685V738H686V738H687V738H688V730H689V731H690V728H691V726H692V738H693V738H694V733H695V734H696V737H697V736H698V732H699V731H700V738H701V738H702V736H703V738H704V738H705V738H706V737H707V728H708V727H709V732H710V738H711V738H712V738H713V730H714V731H715V727H716V730H717V738H718V730H719V726H720V732H721V735H722V738H723V738H724V738H725V738H726V738H727V736H728V738H729V736H730V738H731V738H732V737H733V737H734V735H735V738H736V738H737V737H738V738H739V734H740V733H741V738H742V738H743V738H744V731H745V732H746V738H747V737H748V736H749V738H750V738H751V738H752V732H753V730H754V730H755V738H756V730H757V730H758V731H759V734H760V738H761V738H762V738H763V738H764V738H765V738H766V732H767V733H768V738H769V728H770V731H771V732H772V732H773V731H774V738H775V738H776V738H777V738H778V738H779V738H780V738H781V738H782V738H783V738H784V735H785V730H786V735H787V731H788V738H789V738H790V738H791V731H792V738H793V738H794V734H795V738H796V738H797V726H798V730H799V728H800V738H801V730H802V732H803V736H804V735H805V729H806V736H807V733H808V734H809V731H810V734H811V736H812V728H813V731H814V727H815V736H816V736H817V732H818V732H819V732H820V732H821V732H822V736H823V736H824V735H825V729H826V731H827V730H828V732H829V730H830V730H831V731H832V736H833V736H834V730H835V735H836V734H837V736H838V732H839V733H840V733H841V733H842V729H843V733H844V731H845V736H846V736H847V733H848V732H849V732H850V732H851V731H852V733H853V730H854V734H855V726H856V731H857V729H858V726H859V734H860V736H861V736H862V731H863V730H864V731H865V730H866V730H867V732H868V731H869V733H870V730H871V732H872V735H873V736H874V735H875V731H876V733H877V730H878V733H879V734H880V728H881V729H882V736H883V732H884V735H885V735H886V735H887V732H888V733H889V733H890V727H891V731H892V730H893V729H894V730H895V730H896V736H897V734H898V736H899V731H900V734H901V736H902V736H903V736H904V729H905V728H906V736H907V736H908V732H909V728H910V727H911V731H912V731H913V736H914V733H915V734H916V736H917V736H918V729H919V730H920V727H921V726H922V736H923V735H924V736H925V726H926V729H927V736H928V731H929V731H930V731H931V732H932V732H933V734H934V733H935V733H936V731H937V734H938V733H939V731H940V730H941V733H942V731H943V733H944V732H945V735H946V731H947V730H948V728H949V736H950V732H951V736H952V731H953V738H954V738H955V729H956V730H957V732H958V730H959V738H960V735H961V738H962V734H963V729H964V732H965V738H966V738H967V738H968V738H969V733H970V732H971V730H972V729H973V737H974V738H975V738H976V738H977V734H978V731H979V733H980V734H981V734H982V738H983V738H984V738H985V738H986V738H987V737H988V736H989V738H990V738H991V732H992V730H993V733H994V732H995V732H996V738H997V738H998V738H999V738H1000V738H1001V738H1002V737H1003V738H1004V738H1005V733H1006V734H1007V736H1008V732H1009V738H1010V731H1011V730H1012V728H1013V728H1014V728H1015V738H1016V738H1017V736H1018V738H1019V738H1020V730H1021V730H1022V735H1023V735H1024V733H1025V738H1026V738H1027V734H1028V738H1029V738H1030V738H1031V738H1032V738H1033V738H1034V738H1035V738H1036V738H1037V736H1038V732H1039V732H1040V735H1041V732H1042V735H1043V738H1044V738H1045V738H1046V738H1047V738H1048V738H1049V733H1050V732H1051V735H1052V738H1053V738H1054V738H1055V738H1056V738H1057V738H1058V738H1059V736H1060V736H1061V738H1062V738H1063V737H1064V738H1065V738H1066V738H1067V738H1068V738H1069V738H1070V728H1071V732H1072V738H1073V738H1074V738H1075V738H1076V738H1077V738H1078V738H1079V738H1080V733H1081V735H1082V738H1083V737H1084V738H1085V738H1086V738H1087V738H1088V738H1089V738H1090V738H1091V738H1092V734H1093V730H1094V738H1095V738H1096V732H1097V727H1098V738H1099V738H1100V738H1101V738H1102V738H1103V738H1104V738H1105V738H1106V738H1107V738H1108V738H1109V738H1110V738H1111V737H1112V737H1113V738H1114V729H1115V738H1116V738H1117V728H1118V731H1119V737H1120V738H1121V737H1122V738H1123V738H1124V738H1125V737H1126V738H1127V738H1128V738H1129V738H1130V738H1131V738H1132V738H1133V738H1134V738H1135V738H1136V738H1137V732H1138V732H1139V733H1140V733H1141V738H1142V731H1143V732H1144V735H1145V738H1146V738H1147V731H1148V727H1149V729H1150V729H1151V728H1152V738H1153V738H1154V738H1155V738H1156V738H1157V729H1158V738H1159V735H1160V734H1161V733H1162V732H1163V736H1164V730H1165V730H1166V738H1167V738H1168V736H1169V738H1170V738H1171V738H1172V738H1173V738H1174V738H1175V736H1176V738H1177V737H1178V731H1179V731H1180V737H1181V736H1182V738H1183V738H1184V734H1185V733H1186V730H1187V733H1188V728H1189V726H1190V726H1191V738H1192V738H1193V738H1194V735H1195V735H1196V736H1197V738H1198V738H1199V737H1200V738H1201V738H1202V731H1203V734H1204V733H1205V731H1206V738H1207V738H1208V738H1209V738H1210V738H1211V738H1212V738H1213V738H1214V738H1215V738H1216V731H1217V738H1218V738H1219V738H1220V738H1221V738H1222V738H1223V734H1224V734H1225V738H1226V738H1227V737H1228V735H1229V732H1230V735H1231V735H1232V737H1233V738H1234V738H1235V737H1236V738H1237V738H1238V730H1239V726H1240V729H1241V738H1242V738H1243V733H1244V738H1245V738H1246V738H1247V733H1248V738H1249V731H1250V728H1251V738H1252V731H1253V738H1254V738H1255V735H1256V733H1257V738H1258V738H1259V738H1260V730H1261V726H1262V735H1263V735H1264V731H1265V733H1266V738H1267V738H1268V738H1269V737H1270V738H1271V738H1272V738H1273V738H1274V734H1275V730H1276V732H1277V731H1278V738H1279V729H1280V730H1281V737H1282V726H1283V729H1284V727H1285V727H1286V738H1287V736H1288V738H1289V738H1290V738H1291V738H1292V730H1293V733H1294V736H1295V735H1296V732H1297V737H1298V736H1299V738H1300V731H1301V729H1302V738H1303V732H1304V729H1305V729H1306V730H1307V727H1308V734H1309V731H1310V733H1311V731H1312V732H1313V732H1314V734H1315V732H1316V732H1317V735H1318V732H1319V738H1320V738H1321V731H1322V730H1323V738H1324V738H1325V738H1326V738H1327V738H1328V738H1329V738H1330V733H1331V738H1332V726H1333V738H1334V738H1335V738H1336V738H1337V738H1338V738H1339V728H1340V730H1341V737H1342V738H1343V738H1344V738H1345V738H1346V738H1347V734H1348V735H1349V738H1350V737H1351V738H1352V738H1353V732H1354V738H1355V732H1356V728H1357V738H1358V738H1359V738H1360V726H1361V733H1362V738H1363V722.5Z" fill="#dcefe2"/>
<rect x="357" y="718" width="1006" height="4" fill="#e2f1e7"/>
<rect x="357" y="722" width="1006" height="1" fill="#8fa396"/>
</svg>
<svg class="a" width="1690" height="805" style="left:0;top:0">
 <rect x="353.6" y="497" width="4.2" height="308" fill="#121215" opacity="0.6"/>
 <rect x="354.6" y="497" width="2" height="308" fill="#e84e3c"/>
 <path d="M348.2 493A2 2 0 0 1 350.2 491H361.2A2 2 0 0 1 363.2 493V498.2L356.5 503.5H354.9L348.2 498.2Z" fill="#e84e3c" stroke="#111114" stroke-width="1.1"/>
</svg>

</body></html>
